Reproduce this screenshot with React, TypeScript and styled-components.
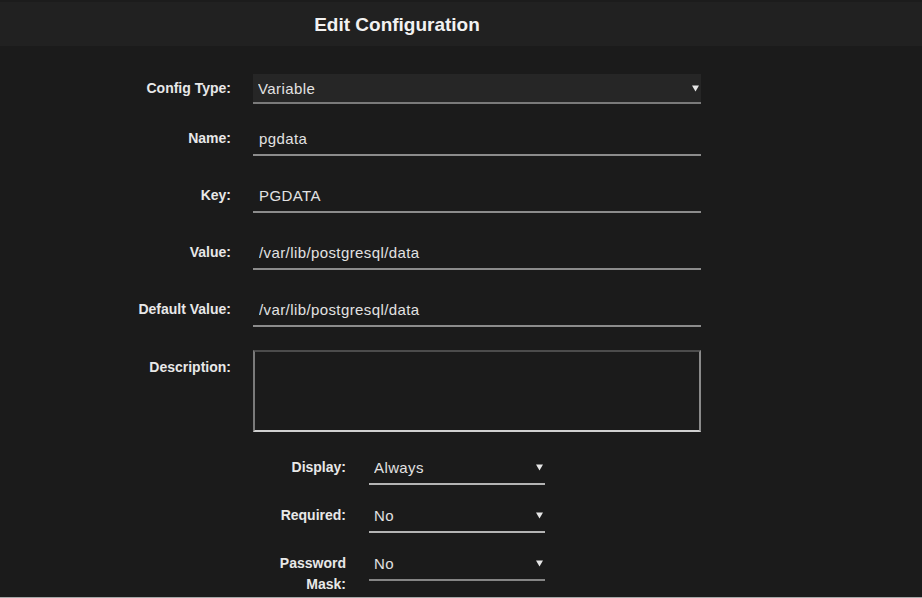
import React from "react"
import styled, { createGlobalStyle } from "styled-components"

const Global = createGlobalStyle`
    html, body {
        margin: 0;
        padding: 0;
        background: #1b1b1b;
    }
    * {
        box-sizing: border-box;
    }
`

const Page = styled.div`
    width: 922px;
    height: 598px;
    background: #1b1b1b;
    border-bottom: 1px solid #a8a8a8;
    font-family: "Liberation Sans", Arial, sans-serif;
    color: #e6e6e6;
    overflow: hidden;
`

const Header = styled.header`
    height: 46px;
    background: #212121;
    border-top: 2px solid #1c1c1c;
    display: flex;
    align-items: center;
`

const Title = styled.h1`
    width: 794px;
    margin: 0;
    padding-top: 2px;
    text-align: center;
    font-size: 19px;
    font-weight: bold;
    color: #f2f2f2;
`

const Form = styled.div`
    padding-top: 28px;
    display: flex;
    flex-direction: column;
`

const Row = styled.div<{ $indent?: number; $labelWidth: number; $fieldWidth: number; $after: number }>`
    display: grid;
    grid-template-columns: ${p => p.$labelWidth}px ${p => p.$fieldWidth}px;
    column-gap: ${p => (p.$indent ? 23 : 22)}px;
    padding-left: ${p => p.$indent ?? 0}px;
    margin-bottom: ${p => p.$after}px;
    align-items: start;
`

const Label = styled.label<{ $top?: number }>`
    text-align: right;
    font-size: 14px;
    font-weight: bold;
    line-height: 21px;
    padding-top: ${p => p.$top ?? 6}px;
    color: #e8e8e8;
`

const valueText = `
    font-family: "Liberation Sans", Arial, sans-serif;
    font-size: 15px;
    letter-spacing: 0.4px;
    color: #e2e2e2;
`

const TextField = styled.input`
    width: 100%;
    height: 34px;
    background: transparent;
    border: none;
    border-bottom: 2px solid #8c8c8c;
    padding: 0 6px;
    outline: none;
    ${valueText}
`

const TextArea = styled.textarea`
    width: 100%;
    height: 82px;
    background: transparent;
    border-style: solid;
    border-width: 2px;
    border-color: #4c4c4c #8a8a8a #d0d0d0 #7a7a7a;
    resize: none;
    outline: none;
    padding: 6px;
    ${valueText}
`

const SelectWrap = styled.div`
    position: relative;
    width: 100%;
`

const Select = styled.select<{ $filled?: boolean; $line: string; $height: number }>`
    appearance: none;
    width: 100%;
    height: ${p => p.$height}px;
    background: ${p => (p.$filled ? "#262626" : "transparent")};
    border: none;
    border-bottom: 2px solid ${p => p.$line};
    border-radius: 0;
    padding: 0 5px;
    outline: none;
    ${valueText}
`

const Arrow = styled.svg`
    position: absolute;
    right: 2px;
    top: 50%;
    margin-top: -4px;
    width: 7px;
    height: 7px;
    pointer-events: none;
`

const Caret = () => (
    <Arrow viewBox="0 0 7 7">
        <path d="M0 0.5 L7 0.5 L3.5 6.5 Z" fill="#e6e6e6" />
    </Arrow>
)

type Choice = { label: string; value: string; options: string[]; line: string }

const smallSelects: Choice[] = [
    { label: "Display:", value: "Always", options: ["Always", "Never"], line: "#b4b4b4" },
    { label: "Required:", value: "No", options: ["No", "Yes"], line: "#b4b4b4" },
    { label: "Password Mask:", value: "No", options: ["No", "Yes"], line: "#858585" },
]

const textFields = [
    { label: "Name:", value: "pgdata" },
    { label: "Key:", value: "PGDATA" },
    { label: "Value:", value: "/var/lib/postgresql/data" },
    { label: "Default Value:", value: "/var/lib/postgresql/data" },
]

const App = () => (
    <Page>
        <Global />
        <Header>
            <Title>Edit Configuration</Title>
        </Header>
        <Form>
            <Row $labelWidth={231} $fieldWidth={448} $after={18}>
                <Label $top={4}>Config Type:</Label>
                <SelectWrap>
                    <Select $filled $line="#7a7a7a" $height={30} defaultValue="Variable">
                        <option>Variable</option>
                        <option>File</option>
                    </Select>
                    <Caret />
                </SelectWrap>
            </Row>

            {textFields.map(f => (
                <Row key={f.label} $labelWidth={231} $fieldWidth={448} $after={23}>
                    <Label>{f.label}</Label>
                    <TextField defaultValue={f.value} readOnly />
                </Row>
            ))}

            <Row $labelWidth={231} $fieldWidth={448} $after={19}>
                <Label $top={7}>Description:</Label>
                <TextArea />
            </Row>

            {smallSelects.map(s => (
                <Row key={s.label} $indent={270} $labelWidth={76} $fieldWidth={176} $after={14}>
                    <Label>{s.label}</Label>
                    <SelectWrap>
                        <Select $line={s.line} $height={34} defaultValue={s.value}>
                            {s.options.map(o => (
                                <option key={o}>{o}</option>
                            ))}
                        </Select>
                        <Caret />
                    </SelectWrap>
                </Row>
            ))}
        </Form>
    </Page>
)

export default App
